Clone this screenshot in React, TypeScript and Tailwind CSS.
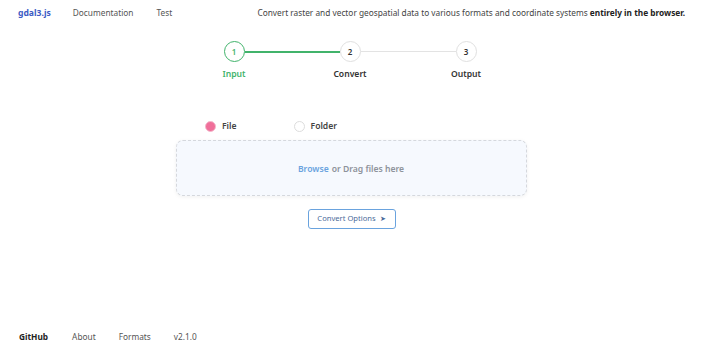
import React from 'react';

const steps = [
  { n: 1, label: 'Input', active: true },
  { n: 2, label: 'Convert', active: false },
  { n: 3, label: 'Output', active: false },
];

const App = () => {
  return (
    <div
      className="w-[702px] h-[351px] bg-white flex flex-col text-[8.3px] text-[#333]"
      style={{ fontFamily: '"Noto Sans", "Open Sans", sans-serif' }}
    >
      {/* Header */}
      <div className="flex items-center h-[26px] pl-[18px] pr-[17px]">
        <span className="font-bold text-[#3d5bc4] text-[8.6px]">gdal3.js</span>
        <span className="ml-[22px] text-[#555]">Documentation</span>
        <span className="ml-[23px] text-[#555]">Test</span>
        <span className="ml-auto text-[#444]">
          Convert raster and vector geospatial data to various formats and coordinate systems{' '}
          <b className="text-[#222]">entirely in the browser.</b>
        </span>
      </div>

      {/* Stepper */}
      <div className="flex justify-center mt-[15px]">
        <div className="flex flex-col w-[253px] ml-[-2px]">
          <div className="flex items-center">
            {steps.map((s, i) => (
              <React.Fragment key={s.n}>
                {i > 0 && (
                  <div
                    className={`flex-1 ${i === 1 ? 'h-[2px] bg-[#41b36b]' : 'h-[1.5px] bg-[#e3e3e3]'}`}
                  />
                )}
                <div
                  className={`w-[21px] h-[21px] rounded-full border-[1.5px] flex items-center justify-center text-[8px] font-semibold ${
                    s.active ? 'border-[#41b36b] text-[#41b36b]' : 'border-[#e0e0e0] text-[#333]'
                  }`}
                >
                  {s.n}
                </div>
              </React.Fragment>
            ))}
          </div>
          <div className="flex justify-between mt-[6px] -mx-[12px] text-[8.6px]">
            {steps.map((s) => (
              <span
                key={s.n}
                className={`w-[45px] text-center font-semibold ${s.active ? 'text-[#41b36b]' : 'text-[#333]'}`}
              >
                {s.label}
              </span>
            ))}
          </div>
        </div>
      </div>

      {/* Radios */}
      <div className="flex items-center mt-[39px] ml-[205px] gap-[57px] text-[8.6px]">
        <label className="flex items-center gap-[6px] font-semibold text-[#444]">
          <span className="w-[11px] h-[11px] rounded-full bg-[#f06f9a] border border-[#f5b8cc]" />
          File
        </label>
        <label className="flex items-center gap-[6px] font-semibold text-[#444]">
          <span className="w-[11px] h-[11px] rounded-full bg-white border border-[#ddd]" />
          Folder
        </label>
      </div>

      {/* Dropzone */}
      <div className="flex justify-center mt-[7px]">
        <div className="w-[351px] h-[56px] rounded-[7px] border border-dashed border-[#d5d8dd] bg-[#f6f9fe] shadow-[0_1px_4px_rgba(0,0,0,0.06)] flex items-center justify-center font-semibold text-[#8e939b] text-[8.6px] pt-[3px]">
          <span className="text-[#6aa3de] mr-[3px]">Browse</span> or Drag files here
        </div>
      </div>

      {/* Convert options */}
      <div className="flex justify-center mt-[13px] ml-[1px]">
        <button className="h-[20px] w-[88px] rounded-[3px] border border-[#6aa3de] text-[#4a6a9a] text-[7.6px] flex items-center justify-center gap-[4px]">
          Convert Options <span className="text-[6.5px]">➤</span>
        </button>
      </div>

      {/* Footer */}
      <div className="mt-auto mb-[8px] flex items-center pl-[19px] text-[#555]">
        <span className="font-bold text-[#222]">GitHub</span>
        <span className="ml-[24px]">About</span>
        <span className="ml-[23px]">Formats</span>
        <span className="ml-[23px]">v2.1.0</span>
      </div>
    </div>
  );
};

export default App;
